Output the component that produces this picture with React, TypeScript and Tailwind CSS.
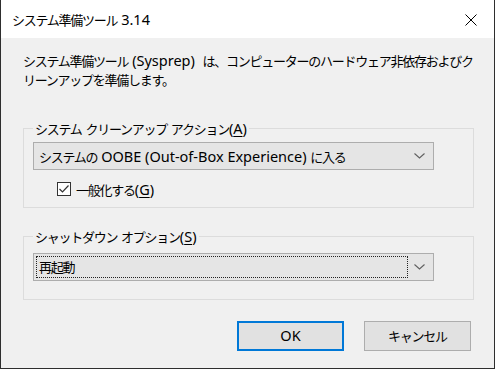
import type { ReactNode } from "react";

const latin = "font-['Noto_Sans',sans-serif] text-[14.5px] tracking-normal";

function L({ children }: { children: ReactNode }) {
  return <span className={latin}>{children}</span>;
}

// a latin-width space between CJK runs
function Sp() {
  return <span className={latin}> </span>;
}

function Key({ k }: { k: string }) {
  return (
    <L>
      (<span className="underline decoration-1 underline-offset-[2px]">{k}</span>)
    </L>
  );
}

function Chevron() {
  return (
    <svg width="11" height="6" viewBox="0 0 11 6" className="text-[#606060]">
      <polyline points="0.5,0.5 5.5,5 10.5,0.5" fill="none" stroke="currentColor" strokeWidth="1.1" />
    </svg>
  );
}

function Combo({ value, focused }: { value: ReactNode; focused?: boolean }) {
  return (
    <div className="ml-[9px] flex h-[28px] w-[401px] border border-[#adadad] bg-[#e5e5e5]">
      <div
        className={
          "my-[2px] ml-[2px] flex w-[372px] items-center pl-[2px] leading-[18px] " +
          (focused ? "border border-dotted border-[#222]" : "border border-transparent")
        }
      >
        <span className="whitespace-nowrap">{value}</span>
      </div>
      <div className="flex flex-1 items-center justify-center pr-[2px]">
        <Chevron />
      </div>
    </div>
  );
}

function Group({ label, children, className }: { label: ReactNode; children: ReactNode; className?: string }) {
  return (
    <fieldset className={"w-[451px] border border-[#dcdcdc] " + (className ?? "")}>
      <legend className="ml-[9px] px-[2px] leading-[18px]">{label}</legend>
      {children}
    </fieldset>
  );
}

export default function App() {
  return (
    <div className="flex h-[369px] w-[495px] flex-col border-x border-b border-[#2e2e2e] bg-[#f0f0f0] font-['Noto_Sans_CJK_JP','Noto_Sans',sans-serif] text-[13px] tracking-[-1.25px] text-black">
      <div className="flex h-[38px] shrink-0 items-center bg-white">
        <div className="flex-1 pl-[11px] pt-[2px]">
          システム準備ツール<Sp />
          <L>3.14</L>
        </div>
        <div className="flex h-full w-[46px] items-center justify-center pt-[1px]">
          <svg width="12" height="12" viewBox="0 0 12 12">
            <path d="M0.5 0.5 L11.5 11.5 M11.5 0.5 L0.5 11.5" stroke="#000" strokeWidth="1" fill="none" />
          </svg>
        </div>
      </div>

      <div className="flex flex-col pl-[22px]">
        <p className="whitespace-nowrap pt-[13px] leading-[19px]">
          システム準備ツール<Sp />
          <L>(Sysprep)&nbsp; </L>
          は、コンピューターのハードウェア非依存およびク
          <br />
          リーンアップを準備します。
        </p>

        <Group
          className="mt-[30px] pb-[8px] pt-[4px]"
          label={
            <>
              システム<Sp />
              クリーンアップ<Sp />
              アクション<Key k="A" />
            </>
          }
        >
          <Combo
            value={
              <>
                システムの<Sp />
                <L>OOBE (Out-of-Box Experience) </L>
                に入る
              </>
            }
          />
          <div className="mt-[9px] flex h-[20px] items-center pl-[33px]">
            <div className="flex h-[14px] w-[14px] items-center justify-center border border-[#333] bg-white">
              <svg width="10" height="8" viewBox="0 0 10 8">
                <polyline points="0.5,4 3.5,7 9.5,0.5" fill="none" stroke="#333" strokeWidth="1.2" />
              </svg>
            </div>
            <span className="ml-[5px] leading-[18px]">
              一般化する<Key k="G" />
            </span>
          </div>
        </Group>

        <Group
          className="mt-[19px] pb-[18px] pt-[7px]"
          label={
            <>
              シャットダウン<Sp />
              オプション<Key k="S" />
            </>
          }
        >
          <Combo value="再起動" focused />
        </Group>

        <div className="mt-[21px] flex w-[448px] justify-end gap-[20px]">
          <button className="flex h-[30px] w-[107px] items-center justify-center border-2 border-[#0078d7] bg-[#e1e1e1]">
            <L>OK</L>
          </button>
          <button className="flex h-[30px] w-[107px] items-center justify-center border border-[#adadad] bg-[#e1e1e1]">
            キャンセル
          </button>
        </div>
      </div>
    </div>
  );
}
